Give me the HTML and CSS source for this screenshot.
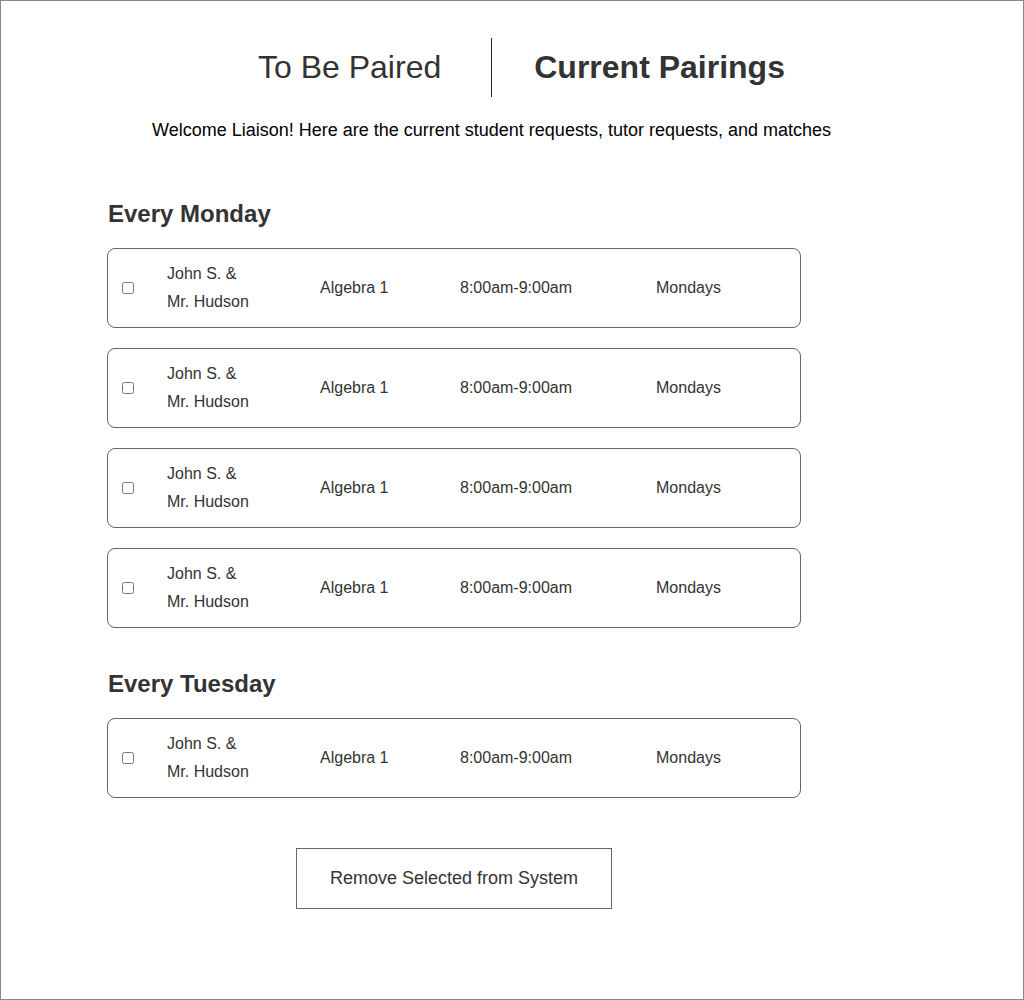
FILE: index.html
```html
<!DOCTYPE html>
<html lang="en">
<head>
  <meta charset="UTF-8">
  <meta name="viewport" content="width=device-width, initial-scale=1.0">
  <title>Current Pairings</title>
  <link rel="stylesheet" href="styles.css">
</head>
<body>
  <div class="frame">
    <div class="tabs">
      <a class="tab">To Be Paired</a>
      <span class="divider"></span>
      <a class="tab active">Current Pairings</a>
    </div>
    <p class="welcome">Welcome Liaison! Here are the current student requests, tutor requests, and matches</p>

    <div class="section">
      <h2>Every Monday</h2>
      <div class="pair">
        <input type="checkbox">
        <div class="names">John S. &amp;<br>Mr. Hudson</div>
        <div class="subject">Algebra 1</div>
        <div class="time">8:00am-9:00am</div>
        <div class="day">Mondays</div>
      </div>
      <div class="pair">
        <input type="checkbox">
        <div class="names">John S. &amp;<br>Mr. Hudson</div>
        <div class="subject">Algebra 1</div>
        <div class="time">8:00am-9:00am</div>
        <div class="day">Mondays</div>
      </div>
      <div class="pair">
        <input type="checkbox">
        <div class="names">John S. &amp;<br>Mr. Hudson</div>
        <div class="subject">Algebra 1</div>
        <div class="time">8:00am-9:00am</div>
        <div class="day">Mondays</div>
      </div>
      <div class="pair">
        <input type="checkbox">
        <div class="names">John S. &amp;<br>Mr. Hudson</div>
        <div class="subject">Algebra 1</div>
        <div class="time">8:00am-9:00am</div>
        <div class="day">Mondays</div>
      </div>
    </div>

    <div class="section">
      <h2>Every Tuesday</h2>
      <div class="pair">
        <input type="checkbox">
        <div class="names">John S. &amp;<br>Mr. Hudson</div>
        <div class="subject">Algebra 1</div>
        <div class="time">8:00am-9:00am</div>
        <div class="day">Mondays</div>
      </div>
    </div>

    <div class="actions">
      <button>Remove Selected from System</button>
    </div>
  </div>
</body>
</html>
```

FILE: styles.css
```css
body {
  font-family: "Liberation Sans", Arial, sans-serif;
  background: white;
  color: #333;
  margin: 0;
  padding: 0;
}
.frame {
  box-sizing: border-box;
  width: 1024px;
  height: 1000px;
  border: 1px solid #888;
  padding-top: 37px;
}
.tabs {
  display: flex;
  align-items: center;
  padding-left: 257px;
}
.tab {
  font-size: 32px;
  color: #333;
}
.tab.active {
  font-weight: bold;
}
.divider {
  width: 1px;
  height: 59px;
  background: #222;
  margin: 0 42px 0 50px;
}
.welcome {
  margin: 23px 0 0 0;
  padding-left: 151px;
  font-size: 18px;
  color: #000;
}
.section {
  padding-left: 106px;
  margin-top: 59px;
}
.section + .section {
  margin-top: 42px;
}
h2 {
  font-size: 24px;
  font-weight: bold;
  margin: 0 0 20px 1px;
  color: #333;
}
.pair {
  display: flex;
  align-items: center;
  box-sizing: border-box;
  width: 694px;
  height: 80px;
  border: 1px solid #666;
  border-radius: 8px;
  margin-bottom: 20px;
  font-size: 16px;
  color: #333;
}
.pair input {
  width: 12px;
  height: 12px;
  margin: 0 33px 0 14px;
  accent-color: #666;
}
.names {
  line-height: 28px;
  width: 153px;
}
.subject {
  width: 140px;
}
.time {
  width: 196px;
}
.actions {
  padding-left: 295px;
  margin-top: 50px;
}
button {
  box-sizing: border-box;
  width: 316px;
  height: 61px;
  background: white;
  border: 1px solid #666;
  font-family: "Liberation Sans", Arial, sans-serif;
  font-size: 18px;
  color: #333;
}
```
